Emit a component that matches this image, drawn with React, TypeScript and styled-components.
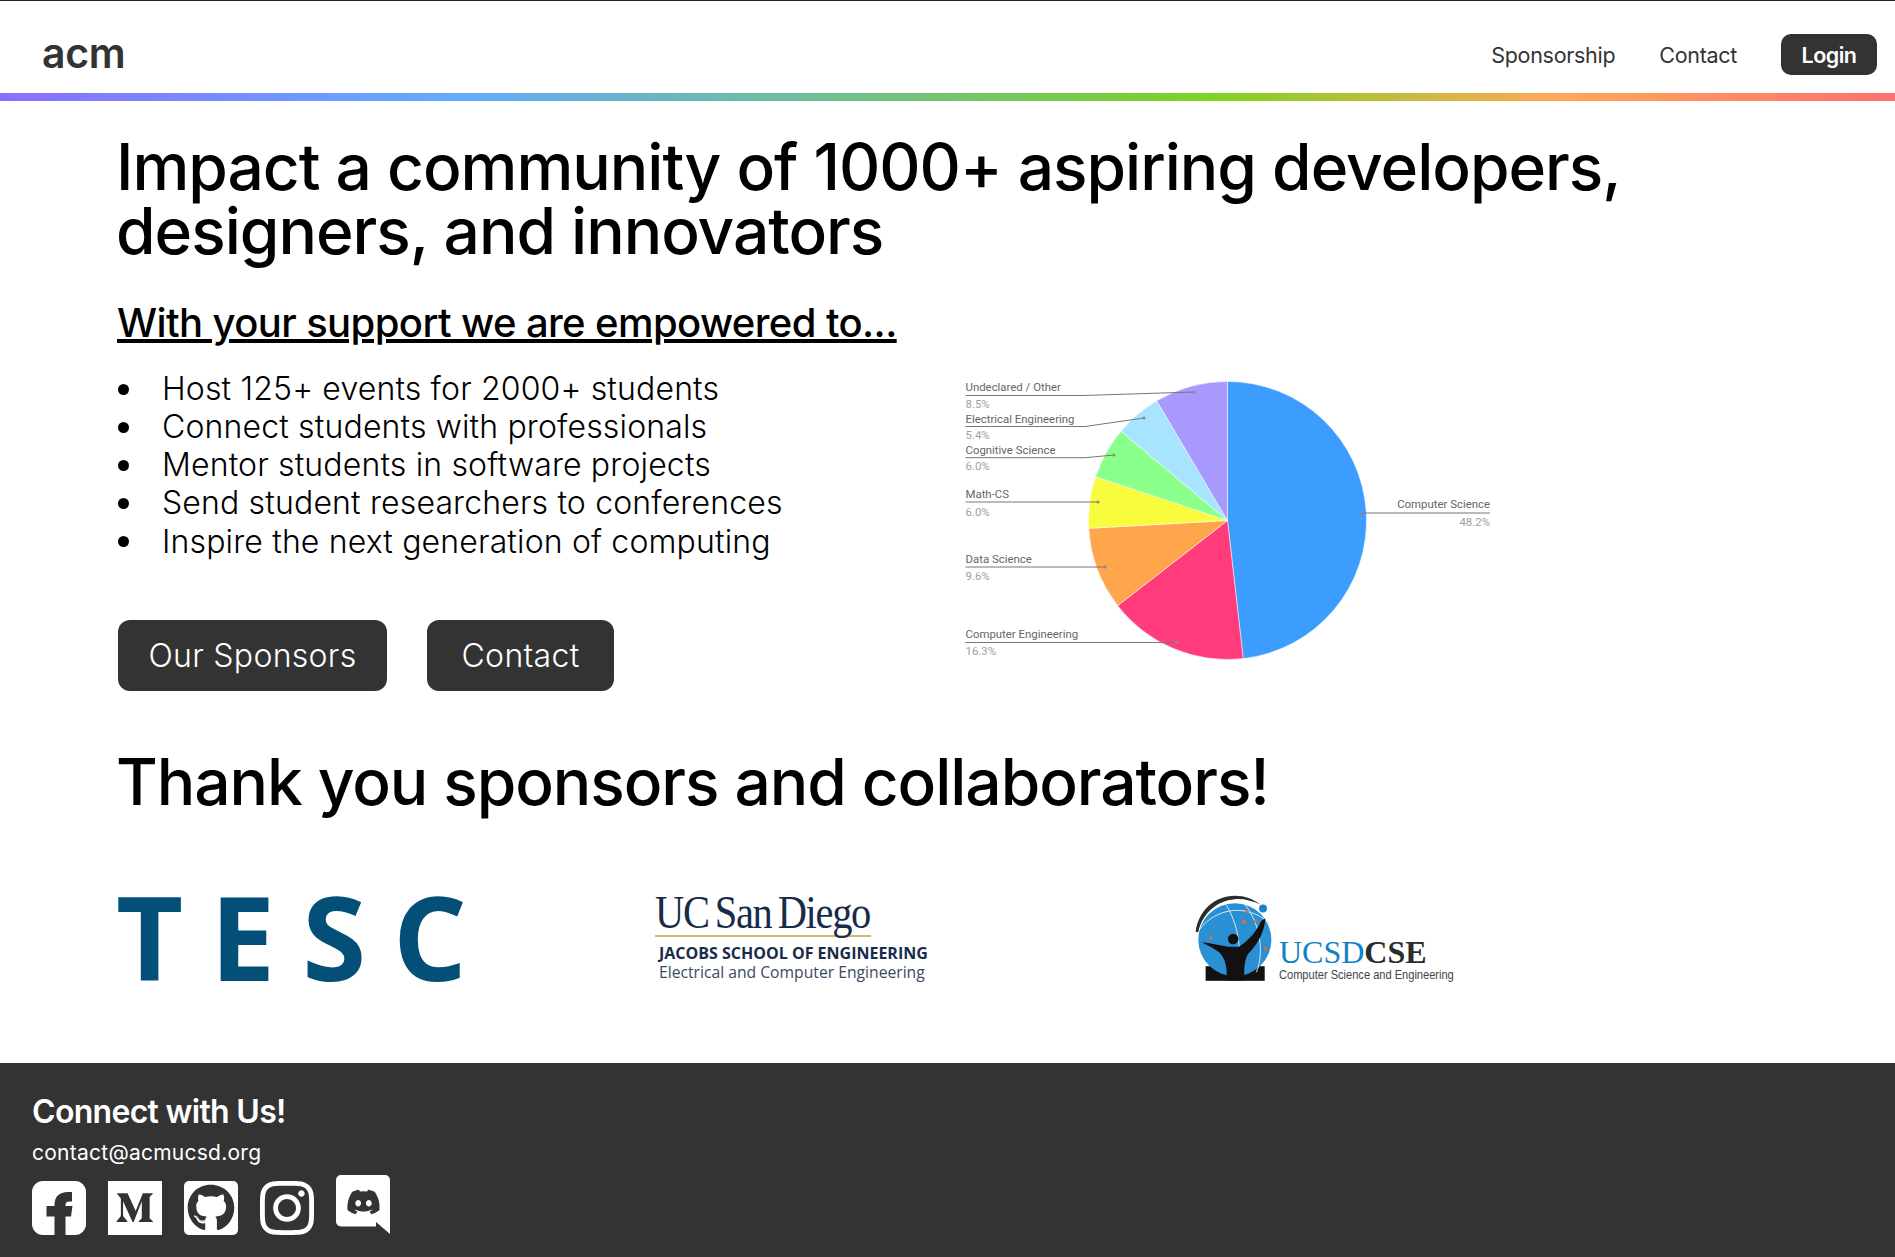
import * as React from 'react';
import styled, { createGlobalStyle } from 'styled-components';
import { FaMedium, FaGithub, FaInstagram, FaDiscord } from 'react-icons/fa';

const SANS = `Inter, "Open Sans", "Liberation Sans", sans-serif`;

const GlobalStyle = createGlobalStyle`
  html, body {
    margin: 0;
    padding: 0;
    background: #fff;
    font-family: ${SANS};
  }
`;

interface Slice {
  share: number;
  color: string;
}

const slices: Slice[] = [
  { share: 48.2, color: '#3d9dff' },
  { share: 16.3, color: '#ff3b7b' },
  { share: 9.6, color: '#ffa64d' },
  { share: 6.0, color: '#f9fc3c' },
  { share: 6.0, color: '#8aff8a' },
  { share: 5.4, color: '#a8e3ff' },
  { share: 8.5, color: '#a899ff' },
];

interface Callout {
  name: string;
  pct: string;
  x: number;
  nameY: number;
  pctY: number;
  line: string;
  end: boolean;
}

const callouts: Callout[] = [
  { name: 'Undeclared / Other', pct: '8.5%', x: 15.5, nameY: 31, pctY: 48, line: '15.5,35.5 133,35.5 244,32', end: false },
  { name: 'Electrical Engineering', pct: '5.4%', x: 15.5, nameY: 63, pctY: 79, line: '15.5,66.5 135,66.5 194,58', end: false },
  { name: 'Cognitive Science', pct: '6.0%', x: 15.5, nameY: 94, pctY: 110, line: '15.5,97.7 135,97.7 164,95', end: false },
  { name: 'Math-CS', pct: '6.0%', x: 15.5, nameY: 138, pctY: 156, line: '15.5,142 148,142', end: false },
  { name: 'Data Science', pct: '9.6%', x: 15.5, nameY: 203, pctY: 220, line: '15.5,207 155,207', end: false },
  { name: 'Computer Engineering', pct: '16.3%', x: 15.5, nameY: 278, pctY: 295, line: '15.5,282.5 227,282.5', end: false },
  { name: 'Computer Science', pct: '48.2%', x: 540, nameY: 148, pctY: 166, line: '540,153 411,153', end: true },
];

const CX = 277.5;
const CY = 160.5;
const R = 139;

function slicePaths(): { d: string; color: string }[] {
  let angle = 0;
  return slices.map((s) => {
    const start = angle;
    angle += (s.share / 100) * Math.PI * 2;
    const x1 = CX + R * Math.sin(start);
    const y1 = CY - R * Math.cos(start);
    const x2 = CX + R * Math.sin(angle);
    const y2 = CY - R * Math.cos(angle);
    const large = s.share > 50 ? 1 : 0;
    return {
      d: `M${CX} ${CY} L${x1} ${y1} A${R} ${R} 0 ${large} 1 ${x2} ${y2} Z`,
      color: s.color,
    };
  });
}

const MajorChart: React.FC = () => (
  <ChartSvg viewBox="0 0 560 310">
    {slicePaths().map((p) => (
      <path key={p.color} d={p.d} fill={p.color} stroke="#fff" strokeWidth="0.5" />
    ))}
    {callouts.map((c) => {
      const pts = c.line.split(' ');
      const last = pts[pts.length - 1].split(',');
      return (
        <g key={c.name} textAnchor={c.end ? 'end' : 'start'}>
          <polyline points={c.line} fill="none" stroke="#777" strokeWidth="1" />
          <circle cx={last[0]} cy={last[1]} r="1.6" fill="#8a8a8a" />
          <ChartName x={c.x} y={c.nameY}>{c.name}</ChartName>
          <ChartPct x={c.x} y={c.pctY}>{c.pct}</ChartPct>
        </g>
      );
    })}
  </ChartSvg>
);

const FacebookIcon: React.FC = () => (
  <svg viewBox="0 0 54 54" width="54" height="54">
    <rect width="54" height="54" rx="11" fill="#fff" />
    <path
      d="M40 11H36C27 11 22.5 16 22.5 24V25H14.5V35.5H22.5V54H33.5V35.5H39L40.5 25H33.5V24C33.5 21.5 35 20.5 37 20.5H40Z"
      fill="#333"
    />
  </svg>
);

const DiscordIcon: React.FC = () => (
  <svg viewBox="0 0 54 59" width="54" height="59">
    <path d="M5 0H49A5 5 0 0 1 54 5V59L40 47V51.5H5A5 5 0 0 1 0 46.5V5A5 5 0 0 1 5 0Z" fill="#fff" />
    <FaDiscord size={35} x={10} y={9.5} color="#333" />
  </svg>
);

const App: React.FC = () => {
  return (
    <Page>
      <GlobalStyle />
      <Header>
        <Logo>acm</Logo>
        <Nav>
          <NavLink>Sponsorship</NavLink>
          <NavLink>Contact</NavLink>
          <LoginButton>Login</LoginButton>
        </Nav>
      </Header>
      <RainbowBar />

      <Main>
        <Title>Impact a community of 1000+ aspiring developers, designers, and innovators</Title>
        <Subtitle>With your support we are empowered to...</Subtitle>
        <SupportRow>
          <SupportText>
            <Bullets>
              <li>Host 125+ events for 2000+ students</li>
              <li>Connect students with professionals</li>
              <li>Mentor students in software projects</li>
              <li>Send student researchers to conferences</li>
              <li>Inspire the next generation of computing</li>
            </Bullets>
            <Buttons>
              <CtaButton $width={269}>Our Sponsors</CtaButton>
              <CtaButton $width={187}>Contact</CtaButton>
            </Buttons>
          </SupportText>
          <MajorChart />
        </SupportRow>

        <ThanksTitle>Thank you sponsors and collaborators!</ThanksTitle>

        <SponsorRow>
          <SponsorCell>
            <Tesc>TESC</Tesc>
          </SponsorCell>
          <SponsorCell>
            <JacobsLogo>
              <JacobsName>
                <JacobsWordmark>UC San Diego</JacobsWordmark>
              </JacobsName>
              <JacobsSchool>JACOBS SCHOOL OF ENGINEERING</JacobsSchool>
              <JacobsDept>Electrical and Computer Engineering</JacobsDept>
            </JacobsLogo>
          </SponsorCell>
          <SponsorCell>
            <CseLogo>
              <CseGlobe viewBox="40 48 235 258">
                <rect x="72" y="262" width="178" height="44" fill="#111" />
                <path d="M42 158 C50 95 100 50 160 50 C190 50 215 60 236 76 C210 64 185 58 160 60 C105 64 60 105 50 160 Z" fill="#2c2c2c" />
                <circle cx="160" cy="182" r="110" fill="#2b8fd4" />
                <path d="M55 150 C100 90 190 70 262 130 M130 72 C170 130 185 220 165 290 M190 76 C235 130 250 220 225 280" fill="none" stroke="#cfe7f7" strokeWidth="3" />
                <circle cx="245" cy="88" r="12" fill="#1a84d0" />
                <circle cx="197" cy="97" r="5" fill="#ee6b2f" />
                <circle cx="188" cy="128" r="6" fill="#ee6b2f" />
                <circle cx="222" cy="127" r="5" fill="#ee6b2f" />
                <circle cx="88" cy="176" r="5" fill="#ee6b2f" />
                <circle cx="252" cy="208" r="5" fill="#ee6b2f" />
                <circle cx="155" cy="180" r="16" fill="#111" />
                <path d="M60 190 C85 192 115 200 140 203 L172 203 C195 190 225 160 240 125 L252 118 C250 150 235 190 200 225 C190 240 186 270 190 305 L135 305 C138 270 132 240 115 222 C100 210 80 200 60 190 Z" fill="#111" />
              </CseGlobe>
              <CseText>
                <CseName>
                  <CseUcsd>UCSD</CseUcsd>CSE
                </CseName>
                <CseDept>Computer Science and Engineering</CseDept>
              </CseText>
            </CseLogo>
          </SponsorCell>
        </SponsorRow>
      </Main>

      <Footer>
        <FooterTitle>Connect with Us!</FooterTitle>
        <FooterMail>contact@acmucsd.org</FooterMail>
        <Socials>
          <SocialSlot><FacebookIcon /></SocialSlot>
          <SocialSlot><FaMedium size={62} /></SocialSlot>
          <GithubSlot><FaGithub size={48} /></GithubSlot>
          <SocialSlot><FaInstagram size={62} /></SocialSlot>
          <DiscordSlot><DiscordIcon /></DiscordSlot>
        </Socials>
      </Footer>
    </Page>
  );
};

const Page = styled.div`
  display: flex;
  flex-direction: column;
  min-height: 1257px;
  color: #000;
`;

const Header = styled.header`
  display: flex;
  align-items: center;
  justify-content: space-between;
  box-sizing: border-box;
  height: 93px;
  padding: 15px 18px 0 42px;
  border-top: 1px solid #222;
`;

const Logo = styled.div`
  font-size: 41px;
  font-weight: 600;
  color: #333;
  letter-spacing: -0.3px;
  margin-top: -4px;
`;

const Nav = styled.nav`
  display: flex;
  align-items: center;
  gap: 44px;
`;

const NavLink = styled.a`
  font-size: 21.5px;
  color: #333;
  letter-spacing: -0.3px;
`;

const LoginButton = styled.button`
  width: 96px;
  height: 41px;
  border: 0;
  border-radius: 10px;
  background: #333;
  color: #fff;
  font-family: inherit;
  font-size: 21.5px;
  font-weight: 600;
  letter-spacing: -0.5px;
`;

const RainbowBar = styled.div`
  height: 8px;
  background: linear-gradient(90deg, #8a6fff 0%, #62acff 24%, #7ed321 64%, #ffa857 82%, #ff7070 100%);
`;

const Main = styled.main`
  flex: 1;
  padding: 34px 0 0 118px;
`;

const Title = styled.h1`
  margin: 0 0 0 -2px;
  width: 1560px;
  font-size: 64px;
  line-height: 64px;
  font-weight: 500;
  letter-spacing: -1px;
`;

const Subtitle = styled.h2`
  margin: 36px 0 0 -1px;
  font-size: 40px;
  line-height: 48px;
  font-weight: 500;
  letter-spacing: -0.6px;
  text-decoration: underline;
`;

const SupportRow = styled.div`
  display: flex;
  align-items: flex-start;
  margin-top: 13px;
`;

const SupportText = styled.div`
  width: 832px;
  flex: none;
  padding-top: 10px;
`;

const Bullets = styled.ul`
  margin: 0;
  padding: 0;
  list-style: none;
  font-size: 32px;
  line-height: 38.4px;
  font-weight: 300;
  letter-spacing: 0.15px;

  li {
    display: flex;
    align-items: center;
    height: 38.2px;
  }

  li::before {
    content: '';
    flex: none;
    width: 11px;
    height: 11px;
    margin-right: 33px;
    border-radius: 50%;
    background: #000;
  }
`;

const Buttons = styled.div`
  display: flex;
  gap: 40px;
  margin-top: 59px;
`;

const CtaButton = styled.button<{ $width: number }>`
  width: ${(p) => p.$width}px;
  height: 71px;
  padding: 0;
  border: 0;
  border-radius: 12px;
  background: #333;
  color: #fff;
  font-family: inherit;
  font-size: 32px;
  font-weight: 300;
  letter-spacing: 0.3px;
`;

const ChartSvg = styled.svg`
  display: block;
  width: 560px;
  height: 310px;
  flex: none;
`;

const ChartName = styled.text`
  font-family: Roboto, "Liberation Sans", sans-serif;
  font-size: 11.4px;
  fill: #666;
`;

const ChartPct = styled.text`
  font-family: Roboto, "Liberation Sans", sans-serif;
  font-size: 11.4px;
  fill: #a0a0a0;
`;

const ThanksTitle = styled.h1`
  margin: 59px 0 0 -2px;
  font-size: 64px;
  line-height: 64px;
  font-weight: 500;
  letter-spacing: -1.05px;
`;

const SponsorRow = styled.div`
  display: grid;
  grid-template-columns: 537px 538px 1fr;
  margin-top: 77px;
  height: 100px;
  align-items: start;
`;

const SponsorCell = styled.div`
  display: flex;
`;

const Tesc = styled.div`
  font-family: "Open Sans", sans-serif;
  font-size: 116px;
  font-weight: 700;
  line-height: 100px;
  letter-spacing: 27px;
  color: #034f77;
  margin: -5px 0 0 -2px;
`;

const JacobsLogo = styled.div`
  display: flex;
  flex-direction: column;
`;

const JacobsName = styled.div`
  width: 216px;
  height: 44px;
  white-space: nowrap;
  border-bottom: 2px solid #d8b96b;
`;

const JacobsWordmark = styled.span`
  display: inline-block;
  font-family: "Liberation Serif", serif;
  font-size: 46px;
  line-height: 44px;
  letter-spacing: -1.5px;
  word-spacing: -3px;
  color: #182b49;
  transform: scaleX(0.88);
  transform-origin: left center;
`;

const JacobsSchool = styled.div`
  font-family: "Open Sans", sans-serif;
  font-size: 16px;
  font-weight: 700;
  line-height: 20px;
  color: #182b49;
  margin: 6px 0 0 4px;
  white-space: nowrap;
`;

const JacobsDept = styled.div`
  font-family: "Open Sans", sans-serif;
  font-size: 15.7px;
  line-height: 19px;
  color: #3a4a63;
  margin-left: 4px;
  white-space: nowrap;
`;

const CseLogo = styled.div`
  display: flex;
  align-items: flex-end;
  gap: 6px;
  margin: 4px 0 0 2px;
`;

const CseGlobe = styled.svg`
  width: 78px;
  height: 86px;
  display: block;
`;

const CseText = styled.div`
  display: flex;
  flex-direction: column;
  margin-bottom: -2px;
`;

const CseName = styled.div`
  font-family: "Liberation Serif", serif;
  font-size: 32px;
  line-height: 28px;
  color: #2c2c2c;
  font-weight: 700;
`;

const CseUcsd = styled.span`
  color: #1083c7;
  font-weight: 400;
`;

const CseDept = styled.div`
  font-family: "Liberation Sans", sans-serif;
  font-size: 13.5px;
  line-height: 17px;
  color: #444;
  white-space: nowrap;
  transform: scaleX(0.82);
  transform-origin: left center;
`;

const Footer = styled.footer`
  box-sizing: border-box;
  height: 194px;
  padding: 29px 0 0 32px;
  background: #333;
  color: #fff;
`;

const FooterTitle = styled.div`
  font-size: 32px;
  line-height: 40px;
  font-weight: 600;
  letter-spacing: -0.7px;
`;

const FooterMail = styled.div`
  margin-top: 8px;
  font-size: 21px;
  line-height: 25px;
  letter-spacing: 0.25px;
`;

const Socials = styled.div`
  display: flex;
  align-items: flex-start;
  gap: 22px;
  margin-top: 16px;
`;

const SocialSlot = styled.a`
  display: flex;
  align-items: center;
  justify-content: center;
  width: 54px;
  height: 54px;
  color: #fff;
`;

const GithubSlot = styled(SocialSlot)`
  background: #fff;
  border-radius: 5px;
  color: #333;
`;

const DiscordSlot = styled(SocialSlot)`
  margin-top: -6px;
  height: 59px;
`;

export default App;
